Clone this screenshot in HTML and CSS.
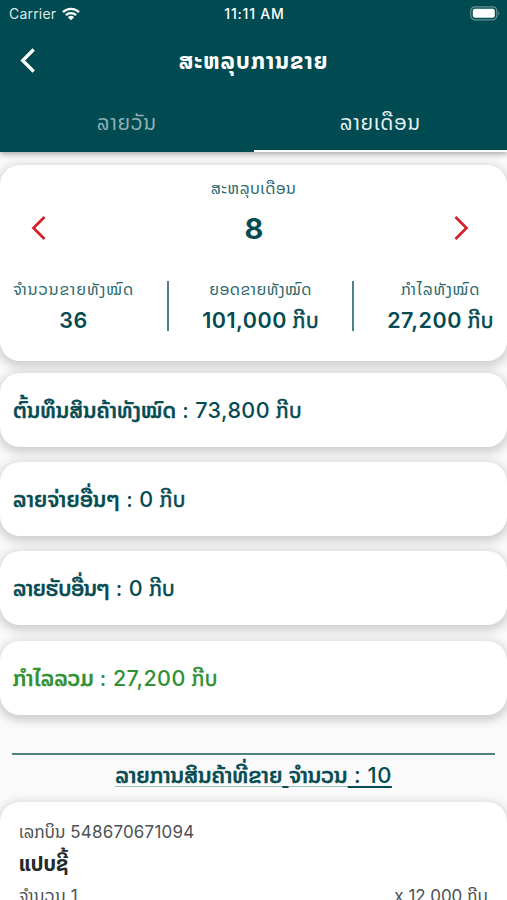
FILE: index.html
```html
<!DOCTYPE html>
<html lang="lo">
<head>
<meta charset="utf-8">
<title>ສະຫລຸບການຂາຍ</title>
<link rel="stylesheet" href="styles.css">
</head>
<body>
<header class="header">
  <div class="status">
    <div class="carrier"><span>Carrier</span>
      <svg class="wifi" width="18" height="14" viewBox="0 0 18 14"><path d="M1 5.2a11.5 11.5 0 0 1 16 0M3.9 8.1a7.4 7.4 0 0 1 10.2 0" fill="none" stroke="#fff" stroke-width="2.3"/><path d="M5.9 10.2a4.6 4.6 0 0 1 6.2 0L9 13.3z" fill="#fff"/></svg>
    </div>
    <div class="clock">11:11 AM</div>
    <svg class="battery" width="31" height="15" viewBox="0 0 31 15"><rect x="1.8" y=".8" width="26" height="13" rx="4" fill="none" stroke="#6b9294" stroke-width="1.2"/><rect x="3.8" y="2.8" width="22" height="9" rx="2" fill="#fff"/><path d="M29.3 5q2 2.3 0 4.6z" fill="#6b9294"/></svg>
  </div>
  <div class="nav">
    <svg class="back" width="16" height="26" viewBox="0 0 16 26"><path d="M13.7 1.5 2.7 12.5l11 11" fill="none" stroke="#fff" stroke-width="3.3"/></svg>
    <h1 class="title"><span class="lao">ສະຫລຸບການຂາຍ</span></h1>
  </div>
  <nav class="tabs">
    <div class="tab tab-day"><span class="lao">ລາຍວັນ</span></div>
    <div class="tab tab-month"><span class="lao">ລາຍເດືອນ</span></div>
  </nav>
</header>
<main class="content">
  <section class="card summary">
    <div class="caption"><span class="lao period">ສະຫລຸບເດືອນ</span></div>
    <div class="stepper">
      <svg width="16" height="26" viewBox="0 0 16 26"><path d="M14.5 2 3.5 13l11 11" fill="none" stroke="#d3202a" stroke-width="2.7"/></svg>
      <strong class="month">8</strong>
      <svg width="16" height="26" viewBox="0 0 16 26"><path d="m1.5 2 11 11-11 11" fill="none" stroke="#d3202a" stroke-width="2.7"/></svg>
    </div>
    <div class="stats">
      <div class="stat"><div class="caption"><span class="lao s1">ຈຳນວນຂາຍທັງໝົດ</span></div><div class="value">36</div></div>
      <div class="divider"></div>
      <div class="stat"><div class="caption"><span class="lao s2">ຍອດຂາຍທັງໝົດ</span></div><div class="value">101,000 <span class="lao kip">ກີບ</span></div></div>
      <div class="divider"></div>
      <div class="stat"><div class="caption"><span class="lao s3">ກຳໄລທັງໝົດ</span></div><div class="value">27,200 <span class="lao kip">ກີບ</span></div></div>
    </div>
  </section>
  <section class="card row"><span class="lao r1">ຕົ້ນທຶນສິນຄ້າທັງໝົດ</span> : 73,800 <span class="lao kip">ກີບ</span></section>
  <section class="card row"><span class="lao r2">ລາຍຈ່າຍອື່ນໆ</span> : 0 <span class="lao kip">ກີບ</span></section>
  <section class="card row"><span class="lao r3">ລາຍຮັບອື່ນໆ</span> : 0 <span class="lao kip">ກີບ</span></section>
  <section class="card row profit"><span class="lao r4">ກຳໄລລວມ</span> : 27,200 <span class="lao kip">ກີບ</span></section>
  <h2 class="list-title"><span class="lao l1">ລາຍການສິນຄ້າທີ່ຂາຍ</span><span class="line"> </span><span class="lao l2">ຈຳນວນ</span><span class="line"> : 10</span></h2>
  <section class="card item">
    <div class="bill"><span class="lao b1">ເລກບິນ</span> 548670671094</div>
    <div class="name"><span class="lao">ແປບຊີ້</span></div>
    <div class="qty"><div><span class="lao q1">ຈຳນວນ</span> 1</div><div>x 12,000 <span class="lao q2">ກີບ</span></div></div>
  </section>
</main>
</body>
</html>
```
FILE: styles.css
```css
* { box-sizing: border-box; }
body {
  margin: 0;
  height: 900px;
  overflow: hidden;
  background: #fafafa;
  color: #044b52;
  font-family: Inter, "Noto Sans Lao", "DejaVu Sans", sans-serif;
}
svg { display: block; flex: none; }
.lao { font-family: "Noto Sans Lao", "DejaVu Sans", sans-serif; line-height: 1; white-space: nowrap; }
.header {
  position: relative;
  height: 152px;
  background: #004a51;
  color: #fff;
  box-shadow: 0 2px 6px rgba(0, 0, 0, .35);
}
.status {
  display: grid;
  grid-template-columns: 1fr auto 1fr;
  align-items: center;
  height: 27px;
  padding: 0 7px 0 9px;
  font-size: 14px;
}
.carrier { display: flex; align-items: center; gap: 6px; letter-spacing: .2px; color: #dce8e9; }
.clock { font-weight: 500; font-size: 14px; letter-spacing: .8px; }
.battery { justify-self: end; }
.nav { display: grid; grid-template-columns: 40px 1fr 40px; align-items: center; height: 68px; padding: 0 20px; }
.title { margin: 0; text-align: center; font-size: 22.5px; line-height: 30px; font-weight: 700; letter-spacing: 1px; }
.tabs { display: grid; grid-template-columns: 1fr 1fr; height: 57px; }
.tab { display: flex; align-items: center; justify-content: center; padding-top: 2px; font-size: 20.5px; letter-spacing: .7px; color: #8fb0b4; border-bottom: 2px solid transparent; }
.tab-month { color: #e6f0f1; border-bottom-color: #fff; }
.content { display: flex; flex-direction: column; padding-top: 13px; }
.card { flex: none; background: #fff; border-radius: 20px; box-shadow: 0 3px 10px 3px rgba(0, 0, 0, .17); }
.summary { height: 196px; margin-bottom: 12px; padding: 11px 13px 0; }
.caption { height: 24px; line-height: 24px; text-align: center; font-size: 16px; color: #2b686d; white-space: nowrap; }
.period { letter-spacing: .4px; }
.stepper { display: flex; align-items: center; justify-content: space-between; height: 56px; padding: 0 24px 0 17px; }
.month { font-size: 29px; font-weight: 700; position: relative; left: 4px; }
.stats { display: flex; justify-content: space-between; padding-top: 21px; }
.stat { display: flex; flex-direction: column; align-items: center; }
.s1 { letter-spacing: .9px; }
.s2 { letter-spacing: .45px; }
.s3 { letter-spacing: .8px; }
.divider { width: 2px; height: 50px; margin-top: 4px; background: #4f8084; }
.value { height: 36px; line-height: 38px; font-size: 21.5px; font-weight: 600; letter-spacing: .5px; white-space: nowrap; }
.kip { font-size: 20.5px; font-weight: 400; -webkit-text-stroke: .6px currentColor; }
.row { height: 74px; margin-bottom: 15.2px; padding-left: 13px; font-size: 21.5px; line-height: 74px; font-weight: 500; letter-spacing: .4px; white-space: pre; }
.row .lao, .list-title .lao { -webkit-text-stroke: .6px currentColor; }
.r1 { letter-spacing: .1px; }
.r2 { letter-spacing: .15px; }
.r3 { letter-spacing: -.45px; }
.r4 { letter-spacing: 0; }
.profit { color: #309034; margin-bottom: 38.4px; }
.list-title { margin: 0 12px; height: 49px; border-top: 2px solid #4f8084; text-align: center; font-size: 22px; line-height: 41px; font-weight: 500; white-space: nowrap; letter-spacing: .5px; }
.list-title .lao { text-decoration: underline; text-decoration-color: #9dbcbe; text-decoration-thickness: 1px; text-underline-offset: 3px; text-decoration-skip-ink: none; letter-spacing: -.05px; }
.line { white-space: pre; text-decoration: underline; text-decoration-thickness: 1.5px; text-underline-offset: 3px; }
.item { height: 140px; padding: 17px 19px 0; color: #4c5154; }
.bill { height: 26px; line-height: 26px; font-size: 17px; letter-spacing: .2px; }
.b1 { letter-spacing: -.1px; }
.name { height: 37px; line-height: 37px; font-size: 20.5px; font-weight: 700; color: #25292c; }
.qty { display: flex; justify-content: space-between; height: 28px; line-height: 28px; font-size: 17px; }
.q1 { letter-spacing: .4px; }
```
